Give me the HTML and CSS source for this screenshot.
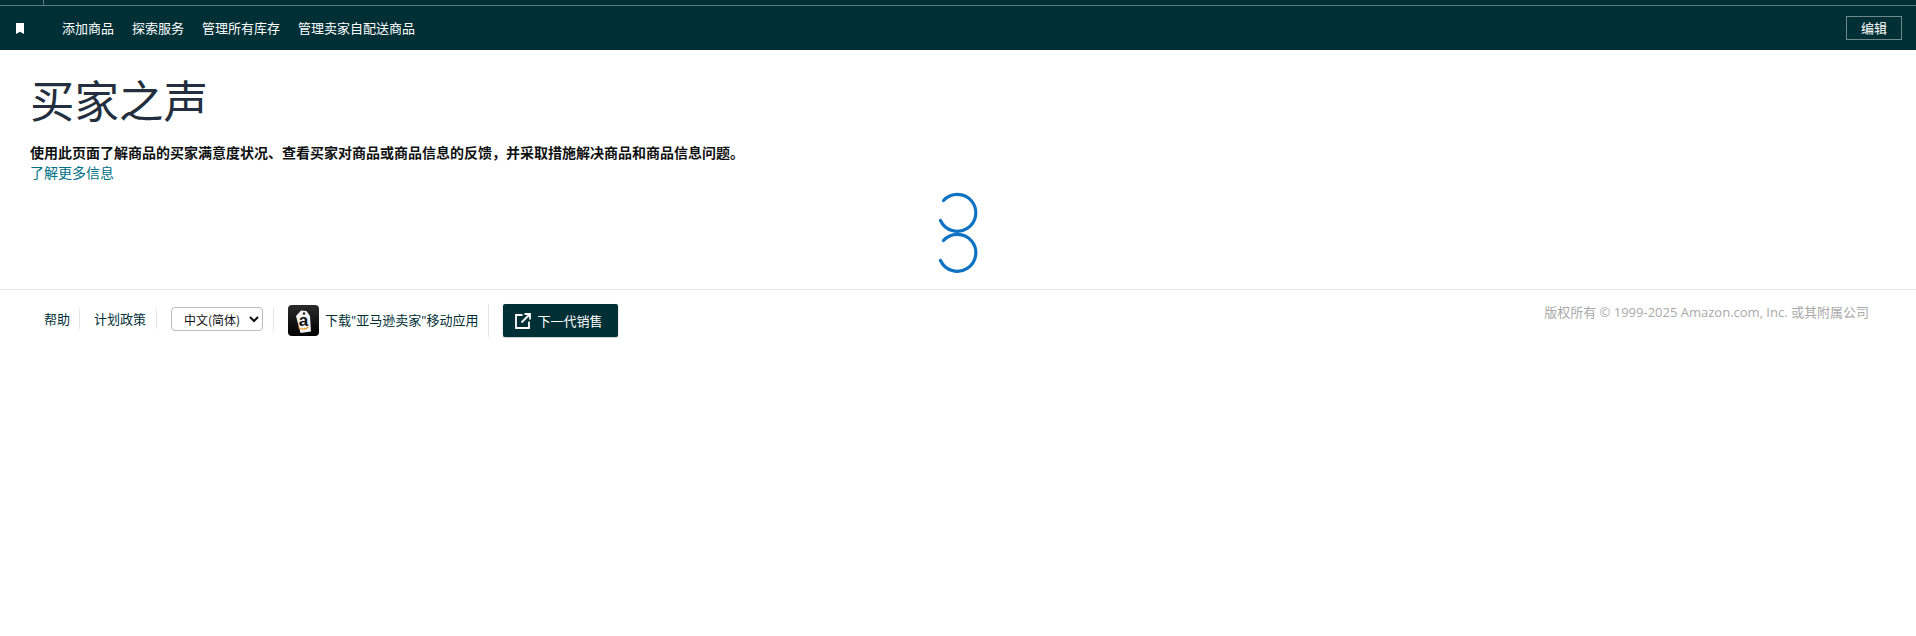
FILE: index.html
```html
<!DOCTYPE html>
<html lang="zh-CN">
<head>
<meta charset="utf-8">
<title>买家之声</title>
<link rel="stylesheet" href="styles.css">
</head>
<body>
<header class="topbar">
  <div class="strip"><span class="strip-cell"></span></div>
  <nav class="nav">
    <svg class="bookmark" width="8" height="11" viewBox="0 0 8 11"><path d="M0 0h8v11L4 8.800 0 11z" fill="#fff"/></svg>
    <ul class="nav-links">
      <li><a href="#">添加商品</a></li>
      <li><a href="#">探索服务</a></li>
      <li><a href="#">管理所有库存</a></li>
      <li><a href="#">管理卖家自配送商品</a></li>
    </ul>
    <button class="edit">编辑</button>
  </nav>
</header>
<main class="main">
  <h1 class="title">买家之声</h1>
  <p class="desc">使用此页面了解商品的买家满意度状况、查看买家对商品或商品信息的反馈，并采取措施解决商品和商品信息问题。</p>
  <a class="more" href="#">了解更多信息</a>
  <div class="spinner">
    <svg class="arc" width="44" height="40" viewBox="0 0 44 40"><path d="M9.500 8.500A18.500 18.500 0 1 1 6.500 28.500"/></svg>
    <svg class="arc" width="44" height="40" viewBox="0 0 44 40"><path d="M9.500 8.500A18.500 18.500 0 1 1 6.500 28.500"/></svg>
  </div>
</main>
<footer class="footer">
  <div class="foot-left">
    <a class="foot-link" href="#">帮助</a>
    <a class="foot-link" href="#">计划政策</a>
    <div class="foot-cell">
      <select class="lang"><option>中文(简体)</option></select>
    </div>
    <a class="foot-app" href="#">
      <svg class="app-logo" width="31" height="31" viewBox="0 0 31 31">
        <defs><linearGradient id="g" x1="0" y1="0" x2="0" y2="1"><stop offset="0" stop-color="#2a2a2a"/><stop offset="1" stop-color="#000"/></linearGradient></defs>
        <rect width="31" height="31" rx="4" fill="url(#g)"/>
        <path d="M13 5.500l5.500 .5 3.500 5 1 15.500-10.500 1.500-4.500-17z" fill="#f3f3f3"/>
        <circle cx="16" cy="8.500" r="1.200" fill="#222"/>
        <text class="tag-a" x="15.500" y="21" text-anchor="middle">a</text>
        <path d="M10.500 22.500q5 3.500 10-.5" fill="none" stroke="#f09a1e" stroke-width="1.300"/>
      </svg>
      <span class="app-text">下载"亚马逊卖家"移动应用</span>
    </a>
    <a class="next" href="#">
      <svg width="16" height="16" viewBox="0 0 16 16" fill="none" stroke="#fff" stroke-width="1.800"><path d="M7.500 2H1v13h13V8.500"/><path d="M6.500 9.500l8-8M9.500 1h5.500v5.500"/></svg>
      <span>下一代销售</span>
    </a>
  </div>
  <div class="copy">版权所有 © 1999-2025 Amazon.com, Inc. 或其附属公司</div>
</footer>
</body>
</html>
```
FILE: styles.css
```css
* { box-sizing: border-box; }
html, body { margin: 0; padding: 0; background: #fff; }
body { font-family: "Noto Sans CJK SC", "Open Sans", sans-serif; font-size: 14px; color: #0f1111; }
a { text-decoration: none; }

.topbar { background: #002f36; height: 50px; }
.strip { height: 6px; border-bottom: 1px solid #5f7b80; }
.strip-cell { display: block; width: 44px; height: 5px; border-right: 1px solid #5f7b80; }
.nav { height: 44px; display: flex; align-items: center; padding: 0 14px 0 16px; }
.bookmark { flex: none; }
.nav-links { list-style: none; margin: 0 0 0 38px; padding: 0; display: flex; gap: 18px; flex: 1; }
.nav-links a { color: #fff; font-size: 13px; line-height: 18px; display: block; }
.edit { width: 56px; height: 24px; padding: 0; background: transparent; border: 1px solid #6f8a8e; color: #fff; font: inherit; font-size: 13px; line-height: 20px; }

.main { padding: 0 30px; }
.title { margin: 27px 0 0; font-size: 44.500px; font-weight: 400; line-height: 44px; height: 49px; color: #232f3e; }
.desc { margin: 16px 0 0; font-size: 14px; font-weight: 700; line-height: 20px; color: #0f1111; }
.more { display: block; font-size: 14px; line-height: 20px; color: #007185; }
.spinner { display: flex; flex-direction: column; align-items: center; margin: 10px 0 0 -5px; }
.arc { display: block; overflow: visible; }
.arc path { fill: none; stroke: #0f73c4; stroke-width: 3.200; stroke-linecap: round; }

.footer { margin-top: 17px; border-top: 1px solid #e7e7e7; display: flex; justify-content: space-between; padding: 14px 47px 0 30px; }
.foot-left { display: flex; align-items: flex-start; height: 34px; }
.foot-link { color: #002f36; font-size: 13px; line-height: 20px; padding: 0 10px 0 14px; border-right: 1px solid #e7e7e7; margin-top: 5px; }
.foot-link:first-child { padding-right: 9px; }
.foot-cell { padding: 0 10px 0 14px; border-right: 1px solid #e7e7e7; height: 24px; margin-top: 3px; display: flex; align-items: center; }
.lang { width: 92px; height: 24px; font-family: inherit; font-size: 12px; color: #0f1111; background: #fff; border: 1px solid #bbb; border-radius: 4px; padding: 0 0 0 8px; }
.foot-app { display: flex; align-items: center; gap: 6px; color: #002f36; font-size: 13px; padding: 0 10px 0 14px; border-right: 1px solid #e7e7e7; height: 33px; }
.app-logo { flex: none; }
.app-text { font-family: "Open Sans", "Noto Sans CJK SC", sans-serif; margin-top: -3px; }
.tag-a { font-family: "Liberation Sans", sans-serif; font-size: 17px; font-weight: 700; fill: #111; }
.next { margin-left: 14px; width: 115px; height: 33px; padding-left: 12px; background: #002f36; color: #fff; font-size: 13px; border-radius: 2px; display: flex; align-items: center; gap: 6px; box-shadow: 0 1px 2px rgba(0,0,0,.25); }
.copy { font-family: "Open Sans", "Noto Sans CJK SC", sans-serif; font-size: 13px; line-height: 20px; color: #aaa; margin-top: -2px; }
```
